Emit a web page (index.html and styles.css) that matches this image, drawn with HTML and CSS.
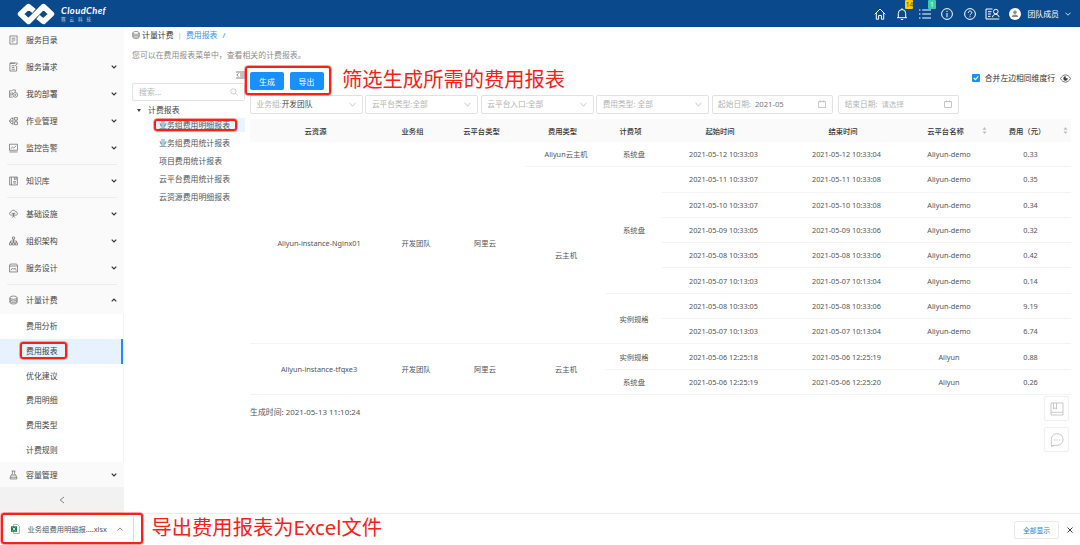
FILE: index.html
```html
<!DOCTYPE html>
<html lang="zh-CN">
<head>
    <meta charset="UTF-8">
    <meta name="viewport" content="width=device-width, initial-scale=1.0">
    <title>费用报表</title>
    <link rel="stylesheet" href="styles.css">
</head>
<body>
    <header class="topbar">
        <div class="brand">
            <svg class="brand-logo" viewBox="0 0 38 22">
                <path d="M17 8 L11.5 3.5 L3.5 11 L11.5 18.5 L26.5 3.5 L34.5 11 L26.5 18.5 L21 14" fill="none" stroke="#fff" stroke-width="5.4" stroke-linejoin="round"/>
            </svg>
            <div class="brand-text">
                <span class="brand-name">CloudChef</span>
                <span class="brand-sub">骞云科技</span>
            </div>
        </div>
        <div class="top-actions">
            <span class="top-icon"><svg viewBox="0 0 12 12"><path d="M.7 6.3L6 1L11.3 6.3M2.3 5V11.2H4.6V7.5H7.4V11.2H9.7V5"/></svg></span>
            <span class="top-icon"><svg viewBox="0 0 12 12"><path d="M1 9.7H11M2.3 9.7V5.5A3.7 4 0 0 1 9.7 5.5V9.7M6 .3V1.7M4.8 11.5H7.2"/></svg><i class="badge yellow">14</i></span>
            <span class="top-icon"><svg viewBox="0 0 12 12"><path d="M0 2H1.5M3.2 2H12M0 6H1.5M3.2 6H12M0 10H1.5M3.2 10H12" stroke-width="1.2"/></svg><i class="badge green">1</i></span>
            <span class="top-icon"><svg viewBox="0 0 12 12"><circle cx="6" cy="6" r="5.4"/><path d="M6 5V9.3M6 2.8V4"/></svg></span>
            <span class="top-icon"><svg viewBox="0 0 12 12"><circle cx="6" cy="6" r="5.4"/><path d="M4.3 4.8C4.3 2.5 7.8 2.5 7.8 4.6C7.8 5.9 6 5.9 6 7.3M6 8.3V9.3"/></svg></span>
            <span class="top-icon wide"><svg viewBox="0 0 15 12"><path d="M7.5 1H1V11H14.3M3 3.7H6.5M3 6H6M3 8.4H5.5M7.5 9.2C7.5 5.5 14 5.5 14 9.2"/><circle cx="10.8" cy="3.6" r="2.3"/></svg></span>
            <span class="avatar"><svg viewBox="0 0 12 12"><circle cx="6" cy="6" r="6" fill="#fff"/><circle cx="6" cy="4.3" r="1.7" fill="#8a8a8a"/><path d="M2.8 9C2.8 5.7 9.2 5.7 9.2 9Z" fill="#8a8a8a"/></svg></span>
            <span class="user-name">团队成员</span>
            <svg class="user-arrow" viewBox="0 0 6 4"><path d="M.5 .7L3 3.2L5.5 .7"/></svg>
        </div>
    </header>

    <div class="layout">
        <aside class="sidebar">
            <div class="menu-item"><svg class="menu-icon" viewBox="0 0 10 10"><path d="M1 .5H9V9.5H1ZM3 3H7M3 5H7M3 7H5"/></svg><span>服务目录</span></div>
            <div class="menu-item"><svg class="menu-icon" viewBox="0 0 10 10"><path d="M8.5 4V9.5H1V1H6.5M1 .5H9M3 3.5H6M3 5.5H6M3 7.5H6.5M6.5 4L9.7 .7"/></svg><span>服务请求</span><svg class="arrow" viewBox="0 0 6 4"><path d="M.7 .7L3 3L5.3 .7"/></svg></div>
            <div class="menu-item"><svg class="menu-icon" viewBox="0 0 10 10"><path d="M4 8.5H.5V1.5H3L4 .5H7V3M2 3.5V7M3.6 3V6"/><circle cx="7" cy="6" r="2.6"/><circle cx="7" cy="6" r=".7"/></svg><span>我的部署</span><svg class="arrow" viewBox="0 0 6 4"><path d="M.7 .7L3 3L5.3 .7"/></svg></div>
            <div class="menu-item"><svg class="menu-icon" viewBox="0 0 10 10"><path d="M4.4 1V9M4.4 2H2.5L.5 5L2.5 8H4.4M.5 5H4.4M6 1.2H9.4V4H6ZM6 6H9.4V9H6ZM7.7 4V6"/></svg><span>作业管理</span><svg class="arrow" viewBox="0 0 6 4"><path d="M.7 .7L3 3L5.3 .7"/></svg></div>
            <div class="menu-item"><svg class="menu-icon" viewBox="0 0 10 10"><path d="M.5 .8H9.5V7.5H.5ZM.5 9.4H9.5M2 5.5L4 4L5.3 5L8 2.5"/></svg><span>监控告警</span><svg class="arrow" viewBox="0 0 6 4"><path d="M.7 .7L3 3L5.3 .7"/></svg></div>
            <div class="divider"></div>
            <div class="menu-item"><svg class="menu-icon" viewBox="0 0 10 10"><path d="M.7 .6H9.3V9.4H.7ZM2.7 .6V9.4M4.7 7.3H7.7M4.7 5.7H7.7M6 .6V3.5L7 2.8L8 3.5V.6"/></svg><span>知识库</span><svg class="arrow" viewBox="0 0 6 4"><path d="M.7 .7L3 3L5.3 .7"/></svg></div>
            <div class="divider"></div>
            <div class="menu-item"><svg class="menu-icon" viewBox="0 0 10 10"><path d="M2.5 6.2C-.2 6 .1 3.2 2 3.1C2.5 .2 7 .2 7.6 2.7C10.2 2.8 10 6.2 7.5 6.2ZM5 4V8M3 9.2L5 7.3L7 9.2M3 4.3H7"/></svg><span>基础设施</span><svg class="arrow" viewBox="0 0 6 4"><path d="M.7 .7L3 3L5.3 .7"/></svg></div>
            <div class="menu-item"><svg class="menu-icon" viewBox="0 0 10 10"><path d="M3.8 .6H6.2V3H3.8ZM5 3V7M1.7 7V5H8.3V7M.5 7H2.9V9.4H.5ZM3.8 7H6.2V9.4H3.8ZM7.1 7H9.5V9.4H7.1Z"/></svg><span>组织架构</span><svg class="arrow" viewBox="0 0 6 4"><path d="M.7 .7L3 3L5.3 .7"/></svg></div>
            <div class="menu-item"><svg class="menu-icon" viewBox="0 0 10 10"><path d="M1.5 .6H8.5L9.5 2.5V9.4H.5V2.5ZM.5 2.8H9.5M2 7.7L4 5L5.5 6.5L6.7 5.2L8.2 7.7"/></svg><span>服务设计</span><svg class="arrow" viewBox="0 0 6 4"><path d="M.7 .7L3 3L5.3 .7"/></svg></div>
            <div class="divider"></div>
            <div class="menu-item"><svg class="menu-icon" viewBox="0 0 10 10"><ellipse cx="5" cy="2.4" rx="4" ry="1.8"/><path d="M1 2.4V7.6C1 10 9 10 9 7.6V2.4M1 4.2C1 6.5 9 6.5 9 4.2M1 6C1 8.3 9 8.3 9 6"/></svg><span>计量计费</span><svg class="arrow" viewBox="0 0 6 4"><path d="M.7 3.3L3 1L5.3 3.3"/></svg></div>
            <div class="submenu">
                <div class="sub-item">费用分析</div>
                <div class="sub-item active">费用报表</div>
                <div class="sub-item">优化建议</div>
                <div class="sub-item">费用明细</div>
                <div class="sub-item">费用类型</div>
                <div class="sub-item">计费规则</div>
            </div>
            <div class="menu-item"><svg class="menu-icon" viewBox="0 0 10 10"><path d="M3 .6H7M3.8 .6V3.5L3 5M6.2 .6V3.5L7 5M2.5 5H7.5M2.5 5L1.3 8V9.4H8.7V8L7.5 5M1.3 7.5H8.7"/></svg><span>容量管理</span><svg class="arrow" viewBox="0 0 6 4"><path d="M.7 .7L3 3L5.3 .7"/></svg></div>
            <div class="collapse"><svg viewBox="0 0 6 8"><path d="M5 1L1.2 4L5 7"/></svg></div>
        </aside>

        <main class="main">
            <div class="breadcrumb">
                <svg class="crumb-icon" viewBox="0 0 10 10"><ellipse cx="5" cy="2.4" rx="4" ry="1.8"/><path d="M1 2.4V7.6C1 10 9 10 9 7.6V2.4M1 4.2C1 6.5 9 6.5 9 4.2M1 6C1 8.3 9 8.3 9 6"/></svg>
                <span>计量计费</span><span class="bar">|</span><a>费用报表</a><a class="slash">/</a>
            </div>
            <p class="desc">您可以在费用报表菜单中，查看相关的计费报表。</p>

            <div class="content">
                <section class="tree">
                    <div class="tree-fold"><svg viewBox="0 0 9 8"><path d="M0 1H9M4 3H9M4 5H9M0 7H9M2.5 2.5L.7 4L2.5 5.5"/></svg></div>
                    <div class="search"><span>搜索...</span><svg viewBox="0 0 9 9"><circle cx="3.8" cy="3.8" r="3"/><path d="M6 6L8.5 8.5"/></svg></div>
                    <div class="tree-root"><i class="caret"></i>计费报表</div>
                    <div class="tree-node selected">业务组费用明细报表</div>
                    <div class="tree-node">业务组费用统计报表</div>
                    <div class="tree-node">项目费用统计报表</div>
                    <div class="tree-node">云平台费用统计报表</div>
                    <div class="tree-node">云资源费用明细报表</div>
                </section>

                <section class="report">
                    <div class="toolbar">
                        <button class="btn">生成</button>
                        <button class="btn">导出</button>
                        <span class="merge">
                            <i class="check"><svg viewBox="0 0 8 8"><path d="M1.8 4L3.4 5.6L6.3 2.4"/></svg></i>
                            <span>合并左边相同维度行</span>
                            <svg class="eye" viewBox="0 0 11 9"><path d="M.5 4.5C3 -.3 8 -.3 10.5 4.5C8 9.3 3 9.3 .5 4.5Z"/><path d="M5.5 2.6A1.9 1.9 0 1 0 7.4 4.5H5.5Z" fill="#333"/></svg>
                        </span>
                    </div>
                    <div class="filters">
                        <div class="filter"><span>业务组:</span><b>开发团队</b><svg class="down" viewBox="0 0 7 5"><path d="M.5 .7L3.5 4.2L6.5 .7"/></svg></div>
                        <div class="filter"><span>云平台类型:全部</span><svg class="down" viewBox="0 0 7 5"><path d="M.5 .7L3.5 4.2L6.5 .7"/></svg></div>
                        <div class="filter"><span>云平台入口:全部</span><svg class="down" viewBox="0 0 7 5"><path d="M.5 .7L3.5 4.2L6.5 .7"/></svg></div>
                        <div class="filter"><span>费用类型: 全部</span><svg class="down" viewBox="0 0 7 5"><path d="M.5 .7L3.5 4.2L6.5 .7"/></svg></div>
                        <div class="filter date"><span>起始日期:</span><em>2021-05</em><svg class="cal" viewBox="0 0 8 8"><path d="M.5 1.5H7.5V7.5H.5ZM2.3 .3V2.5M5.7 .3V2.5"/></svg></div>
                        <div class="filter date last"><span>结束日期:</span><em class="empty">请选择</em><svg class="cal" viewBox="0 0 8 8"><path d="M.5 1.5H7.5V7.5H.5ZM2.3 .3V2.5M5.7 .3V2.5"/></svg></div>
                    </div>

                    <table class="cost-table">
                        <colgroup>
                            <col class="c-res"><col class="c-group"><col class="c-cloud"><col class="c-type"><col class="c-item"><col class="c-time"><col class="c-time"><col class="c-name"><col class="c-fee">
                        </colgroup>
                        <thead>
                            <tr>
                                <th>云资源</th><th>业务组</th><th>云平台类型</th><th>费用类型</th><th>计费项</th><th>起始时间</th><th>结束时间</th>
                                <th class="sortable">云平台名称<svg class="sort" viewBox="0 0 5 8"><path d="M2.5 0L4.7 3H.3ZM2.5 8L4.7 5H.3Z"/></svg></th>
                                <th class="sortable">费用（元）<svg class="sort" viewBox="0 0 5 8"><path d="M2.5 0L4.7 3H.3ZM2.5 8L4.7 5H.3Z"/></svg></th>
                            </tr>
                        </thead>
                        <tbody>
                            <tr><td rowspan="8">Aliyun-instance-Nginx01</td><td rowspan="8">开发团队</td><td rowspan="8">阿里云</td><td>Aliyun云主机</td><td>系统盘</td><td>2021-05-12 10:33:03</td><td>2021-05-12 10:33:04</td><td>Aliyun-demo</td><td>0.33</td></tr>
                            <tr><td rowspan="7">云主机</td><td rowspan="5">系统盘</td><td>2021-05-11 10:33:07</td><td>2021-05-11 10:33:08</td><td>Aliyun-demo</td><td>0.35</td></tr>
                            <tr><td>2021-05-10 10:33:07</td><td>2021-05-10 10:33:08</td><td>Aliyun-demo</td><td>0.34</td></tr>
                            <tr><td>2021-05-09 10:33:05</td><td>2021-05-09 10:33:06</td><td>Aliyun-demo</td><td>0.32</td></tr>
                            <tr><td>2021-05-08 10:33:05</td><td>2021-05-08 10:33:06</td><td>Aliyun-demo</td><td>0.42</td></tr>
                            <tr><td>2021-05-07 10:13:03</td><td>2021-05-07 10:13:04</td><td>Aliyun-demo</td><td>0.14</td></tr>
                            <tr><td rowspan="2">实例规格</td><td>2021-05-08 10:33:05</td><td>2021-05-08 10:33:06</td><td>Aliyun-demo</td><td>9.19</td></tr>
                            <tr><td>2021-05-07 10:13:03</td><td>2021-05-07 10:13:04</td><td>Aliyun-demo</td><td>6.74</td></tr>
                            <tr><td rowspan="2">Aliyun-instance-tfqxe3</td><td rowspan="2">开发团队</td><td rowspan="2">阿里云</td><td rowspan="2">云主机</td><td>实例规格</td><td>2021-05-06 12:25:18</td><td>2021-05-06 12:25:19</td><td>Aliyun</td><td>0.88</td></tr>
                            <tr><td>系统盘</td><td>2021-05-06 12:25:19</td><td>2021-05-06 12:25:20</td><td>Aliyun</td><td>0.26</td></tr>
                        </tbody>
                    </table>
                    <p class="created">生成时间: 2021-05-13 11:10:24</p>
                </section>
            </div>
        </main>
    </div>

    <footer class="download-bar">
        <div class="file">
            <svg class="xls" viewBox="0 0 9 10"><path d="M2.5 .5H6.5L8.5 2.5V9.5H2.5Z" fill="#fff" stroke="#999" stroke-width=".7"/><rect y="2.3" width="6" height="5.5" fill="#16804a"/><path d="M1.7 3.6L4.3 6.5M4.3 3.6L1.7 6.5" stroke="#fff" stroke-width=".8"/></svg>
            <span>业务组费用明细报....xlsx</span>
            <svg class="up" viewBox="0 0 6 4"><path d="M.5 3.4L3 .9L5.5 3.4"/></svg>
        </div>
        <button class="show-all">全部显示</button>
        <svg class="close" viewBox="0 0 6 6"><path d="M.5 .5L5.5 5.5M5.5 .5L.5 5.5"/></svg>
    </footer>

    <div class="float-tools">
        <div class="float-btn"><svg viewBox="0 0 14 14"><path d="M1 1H13V13H1ZM1 10.3H13M3.5 1V7L5 5.8L6.5 7V1"/></svg></div>
        <div class="float-btn"><svg viewBox="0 0 14 14"><path d="M1.3 13.2V7A5.9 5.9 0 1 1 7.2 12.4H4.3ZM1.3 13.2L4.3 12.4"/><path d="M4 7H5.2M6.5 7H7.7M9 7H10.2" stroke-width="1.2"/></svg></div>
    </div>

    <!-- 标注 -->
    <div class="mark mark-buttons"></div>
    <div class="mark mark-tree"></div>
    <div class="mark mark-menu"></div>
    <div class="mark mark-file"></div>
    <div class="note note-filter">筛选生成所需的费用报表</div>
    <div class="note note-export">导出费用报表为Excel文件</div>
</body>
</html>
```

FILE: styles.css
```css
* {
    box-sizing: border-box;
}
body {
    margin: 0;
    width: 1080px;
    height: 545px;
    overflow: hidden;
    position: relative;
    display: flex;
    flex-direction: column;
    background-color: #fff;
    color: #444;
    font-family: "Noto Sans", "Noto Sans CJK SC", sans-serif;
    font-size: 7.9px;
    line-height: 12px;
}
svg {
    display: block;
    flex: none;
    fill: none;
    stroke: #666;
    stroke-width: 0.8;
}
p {
    margin: 0;
}
button {
    font-family: inherit;
    padding: 0;
}

/* 顶部导航 */
.topbar {
    flex: none;
    height: 27px;
    background-color: #0a4a8c;
    color: #fff;
    display: flex;
    justify-content: space-between;
    align-items: center;
    padding: 0 9px 0 17px;
}
.brand {
    display: flex;
    align-items: center;
    gap: 6px;
}
.brand-logo {
    width: 38px;
    height: 22px;
}
.brand-text {
    display: flex;
    flex-direction: column;
}
.brand-name {
    font-family: Lato, sans-serif;
    font-weight: bold;
    font-style: italic;
    font-size: 9.4px;
    line-height: 10px;
    letter-spacing: 0.4px;
}
.brand-sub {
    font-size: 4.5px;
    line-height: 6px;
    letter-spacing: 4px;
    opacity: 0.75;
}
.top-actions {
    display: flex;
    align-items: center;
}
.top-actions svg {
    stroke: #fff;
}
.top-icon {
    position: relative;
    width: 12px;
    margin-right: 10.5px;
}
.top-icon svg {
    width: 12px;
    height: 12px;
    stroke-width: 1;
}
.top-icon.wide,
.top-icon.wide svg {
    width: 15px;
}
.top-icon.wide {
    margin-right: 9px;
    margin-left: -1px;
}
.badge {
    position: absolute;
    top: -8px;
    width: 8px;
    height: 9px;
    border-radius: 1px;
    font-size: 6.5px;
    line-height: 9px;
    font-style: normal;
    text-align: center;
    color: #5b5200;
}
.yellow {
    background-color: #fdc908;
    left: 9px;
}
.green {
    background-color: #36cfa9;
    color: #e8fff8;
    left: 9px;
}
.avatar svg {
    width: 12px;
    height: 12px;
    stroke: none;
}
.user-name {
    margin: 0 6px 0 6px;
}
.user-arrow {
    width: 6px;
    height: 4px;
}

/* 左侧菜单 */
.layout {
    flex: none;
    height: 486px;
    display: flex;
}
.sidebar {
    width: 124px;
    flex: none;
    background-color: #fafafa;
}
.menu-item {
    height: 27px;
    display: flex;
    align-items: center;
    padding: 0 7.5px 1px 9px;
}
.menu-icon {
    width: 9px;
    height: 10px;
    margin-right: 8px;
}
.arrow {
    width: 6px;
    height: 4px;
    margin-left: auto;
    stroke: #333;
    stroke-width: 1.2;
}
.divider {
    height: 1px;
    margin: 2.4px 7px;
    background-color: #ececec;
}
.submenu {
    background-color: #fff;
    border-right: 1px solid #f5f5f5;
}
.sub-item {
    height: 24.7px;
    line-height: 24.7px;
    padding-left: 26px;
}
.sub-item.active {
    background-color: #e6f3ff;
    border-right: 2px solid #1890ff;
}
.submenu + .menu-item {
    height: 25px;
    padding-bottom: 0;
}
.collapse {
    height: 26px;
    background-color: #f2f2f2;
    display: flex;
    align-items: center;
    justify-content: center;
}
.collapse svg {
    width: 6px;
    height: 8px;
}

/* 主内容 */
.main {
    flex: 1;
    padding: 1px 9px 0 8px;
}
.breadcrumb {
    display: flex;
    align-items: center;
    height: 14px;
    color: #333;
}
.breadcrumb a {
    color: #2f93f7;
}
.crumb-icon {
    width: 8px;
    height: 8px;
    margin-right: 2px;
}
.bar {
    margin: 0 4px;
    color: #bbb;
}
.breadcrumb .slash {
    margin-left: 5px;
}
.desc {
    margin-top: 7px;
    color: #8c8c8c;
}
.content {
    display: flex;
}
.tree {
    width: 113px;
    margin-right: 5px;
    padding-top: 10px;
}
.tree-fold {
    display: flex;
    justify-content: flex-end;
    height: 12px;
}
.tree-fold svg {
    width: 9px;
    height: 8px;
}
.search {
    height: 18px;
    border: 1px solid #e4e4e4;
    border-radius: 2px;
    display: flex;
    align-items: center;
    justify-content: space-between;
    padding: 0 6px;
    color: #b5b5b5;
}
.search svg {
    width: 8px;
    height: 8px;
    stroke: #bbb;
}
.tree-root {
    height: 17px;
    padding-top: 1px;
    display: flex;
    align-items: center;
    padding-left: 5px;
}
.caret {
    border: 2px solid transparent;
    border-top: 3px solid #444;
    border-bottom: 0;
    margin-right: 7px;
}
.tree-node {
    height: 14px;
    line-height: 14px;
    margin: 0 0 4px 24px;
    padding-left: 3px;
    color: #555;
}
.tree-node.selected {
    background-color: #e6f5ff;
}

.report {
    width: 821px;
}
.toolbar {
    height: 34px;
    padding-top: 11px;
    display: flex;
    align-items: flex-start;
    gap: 5.5px;
}
.btn {
    width: 34px;
    height: 18px;
    border: none;
    border-radius: 2px;
    background-color: #1890ff;
    color: #fff;
    font-size: 7.9px;
}
.merge {
    margin-left: auto;
    display: flex;
    align-items: center;
    gap: 5px;
    color: #333;
    font-size: 7.8px;
}
.check {
    width: 8px;
    height: 8px;
    border-radius: 1px;
    background-color: #1890ff;
}
.check svg {
    stroke: #fff;
    stroke-width: 1.1;
}
.eye {
    width: 11px;
    height: 9px;
    stroke: #555;
}
.filters {
    display: flex;
    gap: 2.6px;
}
.filter {
    width: 112.8px;
    height: 18.5px;
    border: 1px solid #e2e2e2;
    border-radius: 2px;
    display: flex;
    align-items: center;
    padding: 0 6px 0 5.5px;
    font-size: 7.7px;
    color: #b3b3b3;
}
.filter b {
    font-weight: normal;
    color: #444;
}
.filter em {
    font-style: normal;
    color: #777;
    margin-left: 4px;
}
.filter em.empty {
    color: #bbb;
    font-size: 7.4px;
}
.filter.date {
    width: 121px;
}
.filter.last {
    margin-left: 3px;
}
.down,
.cal {
    margin-left: auto;
    stroke: #bbb;
}
.down {
    width: 7px;
    height: 5px;
}
.cal {
    width: 8px;
    height: 8px;
}

.cost-table {
    width: 821px;
    margin-top: 5.5px;
    table-layout: fixed;
    border-collapse: separate;
    border-spacing: 0;
    font-size: 7.3px;
    line-height: 10px;
    color: #555;
    text-align: center;
}
.c-res { width: 138px; }
.c-group { width: 56px; }
.c-cloud { width: 82px; }
.c-type { width: 80px; }
.c-item { width: 56px; }
.c-time { width: 123px; }
.c-name { width: 82px; }
.c-fee { width: 81px; }
.cost-table th {
    height: 23px;
    padding: 0 7px 0 0;
    background-color: #fafafa;
    color: #333;
    font-weight: 500;
}
.cost-table td {
    height: 25.3px;
    padding: 0;
    border-bottom: 1px solid #f3f3f3;
}
.sortable {
    position: relative;
}
.sort {
    position: absolute;
    right: 3px;
    top: 8px;
    width: 5px;
    height: 7px;
    fill: #bbb;
    stroke: none;
}
.created {
    margin-top: 11px;
    color: #555;
}

/* 下载栏 */
.download-bar {
    flex: none;
    height: 32px;
    border-top: 1px solid #ececec;
    display: flex;
    align-items: center;
    padding: 0 7px 0 11px;
}
.file {
    width: 123px;
    height: 26px;
    padding-bottom: 1px;
    display: flex;
    align-items: center;
    border-right: 1px solid #ddd;
    color: #555;
    font-size: 7.3px;
    white-space: nowrap;
}
.xls {
    width: 9px;
    height: 10px;
    margin-right: 7.5px;
    stroke: none;
}
.up {
    width: 6px;
    height: 4px;
    margin-left: auto;
    margin-right: 10px;
}
.show-all {
    width: 45px;
    height: 18px;
    margin-left: auto;
    border: 1px solid #e9e9e9;
    border-radius: 2px;
    background-color: #fff;
    color: #2878e8;
    font-size: 6.8px;
}
.close {
    width: 6px;
    height: 6px;
    margin-left: 8px;
    stroke: #444;
    stroke-width: 1;
}

/* 悬浮按钮 */
.float-tools {
    position: absolute;
    left: 1044px;
    top: 396px;
    display: flex;
    flex-direction: column;
    gap: 6px;
}
.float-btn {
    width: 25px;
    height: 25px;
    border: 1px solid #f0f0f0;
    border-radius: 2px;
    background-color: #fff;
    display: flex;
    align-items: center;
    justify-content: center;
}
.float-btn svg {
    width: 14px;
    height: 14px;
    stroke: #bbb;
}

/* 红色标注框 */
.mark {
    position: absolute;
    border: 2px solid #fa2016;
    outline: 0.5px solid rgba(250, 32, 22, 0.4);
    border-radius: 3px;
}
.mark-buttons {
    left: 245px;
    top: 66px;
    width: 86px;
    height: 29px;
}
.mark-tree {
    left: 154px;
    top: 119px;
    width: 83px;
    height: 12px;
}
.mark-menu {
    left: 20px;
    top: 342px;
    width: 47px;
    height: 17px;
}
.mark-file {
    left: 1px;
    top: 513px;
    width: 142px;
    height: 31px;
}
.note {
    position: absolute;
    color: #fa2016;
    font-size: 20.3px;
    line-height: 28px;
    white-space: nowrap;
}
.note-filter {
    left: 342px;
    top: 65px;
}
.note-export {
    left: 151.5px;
    top: 513px;
}
```
